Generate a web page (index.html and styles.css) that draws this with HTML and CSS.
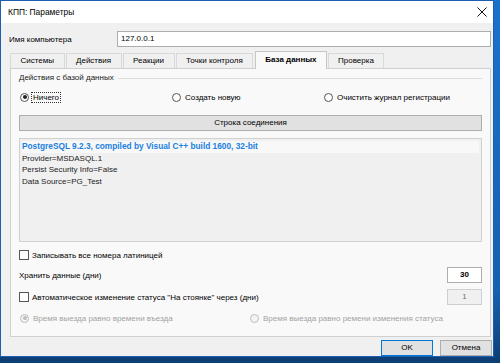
FILE: index.html
```html
<!DOCTYPE html>
<html lang="ru">

<head>
    <meta charset="UTF-8">
    <meta name="viewport" content="width=device-width, initial-scale=1.0">
    <title>КПП: Параметры</title>
    <link rel="stylesheet" href="styles.css">
</head>

<body>
    <div class="window">
        <header class="titlebar">
            <span class="caption">КПП: Параметры</span>
            <svg class="close" width="10" height="10" viewBox="0 0 10 10">
                <path d="M0.5 0.5 L9.5 9.5 M9.5 0.5 L0.5 9.5" stroke="#111" stroke-width="1" fill="none"/>
            </svg>
        </header>

        <main class="client">
            <div class="host-row">
                <span class="label">Имя компьютера</span>
                <div class="edit host">127.0.0.1</div>
            </div>

            <nav class="tabs">
                <div class="tab">Системы</div>
                <div class="tab">Действия</div>
                <div class="tab">Реакции</div>
                <div class="tab">Точки контроля</div>
                <div class="tab active">База данных</div>
                <div class="tab">Проверка</div>
            </nav>

            <section class="page">
                <div class="group-title"><span>Действия с базой данных</span></div>

                <div class="radios three">
                    <div class="radio checked"><i></i><span class="focus">Ничего</span></div>
                    <div class="radio"><i></i><span>Создать новую</span></div>
                    <div class="radio"><i></i><span>Очистить журнал регистрации</span></div>
                </div>

                <div class="btn wide">Строка соединения</div>

                <div class="memo">
                    <p class="version">PostgreSQL 9.2.3, compiled by Visual C++ build 1600, 32-bit</p>
                    <p>Provider=MSDASQL.1</p>
                    <p>Persist Security Info=False</p>
                    <p>Data Source=PG_Test</p>
                </div>

                <div class="check"><i></i><span>Записывать все номера латиницей</span></div>

                <div class="field">
                    <span>Хранить данные (дни)</span>
                    <div class="edit num">30</div>
                </div>

                <div class="field">
                    <div class="check"><i></i><span>Автоматическое изменение статуса "На стоянке" через (дни)</span></div>
                    <div class="edit num disabled">1</div>
                </div>

                <div class="radios two disabled">
                    <div class="radio checked"><i></i><span>Время выезда равно времени въезда</span></div>
                    <div class="radio"><i></i><span>Время выезда равно ремени изменения статуса</span></div>
                </div>
            </section>

            <footer class="buttons">
                <div class="btn default">OK</div>
                <div class="btn">Отмена</div>
            </footer>
        </main>
    </div>
</body>

</html>
```

FILE: styles.css
```css
* {
    margin: 0;
    padding: 0;
    box-sizing: border-box;
}

body {
    width: 500px;
    height: 363px;
    overflow: hidden;
    background: linear-gradient(to bottom, #1b72cc, #1560b0 80%, #0d3d73);
    font: 8px "Liberation Sans", Arial, sans-serif;
    color: #000;
}

.window {
    width: 494px;
    height: 357px;
    border: 1px solid #1a5fb0;
    background-color: #f0f0f0;

    display: flex;
    flex-direction: column;
}

.titlebar {
    height: 22px;
    background-color: #fff;

    display: flex;
    align-items: center;
    justify-content: space-between;
    padding: 0 6px 0 7px;
}

.titlebar .caption {
    font-size: 8.4px;
}

.client {
    flex: 1;
    padding: 8px 2px 0 8px;
}

.host-row {
    height: 16px;
    display: flex;
    align-items: center;
}

.host-row .label {
    width: 108px;
}

.edit {
    height: 16px;
    line-height: 14px;
    padding: 0 3px;
    background-color: #fff;
    border: 1px solid #adadad;
}

.edit.host {
    flex: 1;
}

/* tabs */

.tabs {
    height: 17px;
    margin-top: 4px;
    padding-left: 1px;

    display: flex;
    align-items: flex-end;
}

.tab {
    height: 15px;
    line-height: 13px;
    padding: 0 9.5px;
    margin-right: 1px;
    border: 1px solid #d9d9d9;
    border-bottom: none;
    background-color: #f0f0f0;
}

.tab.active {
    height: 18px;
    line-height: 15px;
    margin: 0 1px -1px 1px;
    padding: 0 9px;
    font-weight: bold;
    border-color: #c6c6c6;
    background-color: #f9f9f9;
    position: relative;
}

.page {
    margin-left: 1px;
    padding: 3px 8px 12px 8px;
    border: 1px solid #d0d0d0;
    background-color: #f9f9f9;
}

.group-title {
    height: 11px;
    line-height: 11px;
    display: flex;
    align-items: center;
    color: #222;
}

.group-title::after {
    content: '';
    flex: 1;
    margin: 1px 0 0 4px;
    border-top: 1px solid #dcdcdc;
}

/* radios and checkboxes */

.radios {
    display: grid;
    margin-top: 8px;
    height: 12px;
}

.radios.three {
    grid-template-columns: 152px 152px 1fr;
}

.radios.two {
    grid-template-columns: 230px 1fr;
    margin-top: 7px;
}

.radio,
.check {
    display: flex;
    align-items: center;
    height: 12px;
}

.radio i {
    width: 9px;
    height: 9px;
    margin: 0 4px 0 1px;
    border: 1px solid #555;
    border-radius: 50%;
    background-color: #fff;

    display: flex;
    align-items: center;
    justify-content: center;
}

.radio.checked i::after {
    content: '';
    width: 4px;
    height: 4px;
    border-radius: 50%;
    background-color: #222;
}

.focus {
    outline: 1px dotted #333;
    outline-offset: 0;
    padding: 0 1px;
    margin-left: -1px;
}

.check i {
    width: 10px;
    height: 10px;
    margin-right: 3px;
    border: 1px solid #555;
    background-color: #fff;
}

.check {
    margin-top: 7px;
}

.disabled {
    color: #a3a3a3;
}

.disabled .radio i {
    border-color: #bcbcbc;
    background-color: #f4f4f4;
}

.disabled .radio.checked i::after {
    background-color: #bcbcbc;
}

/* buttons */

.btn {
    height: 16px;
    line-height: 14px;
    text-align: center;
    border: 1px solid #adadad;
    background-color: #e1e1e1;
}

.btn.wide {
    margin-top: 12px;
}

.memo {
    height: 104px;
    margin-top: 7px;
    padding: 2px 2px 0 2px;
    border: 1px solid #d0d0d0;
    background-color: #f0f0f0;
}

.memo p {
    line-height: 11.5px;
    color: #222;
}

.memo .version {
    color: #1a7fe0;
    font-weight: bold;
    font-size: 8.3px;
    background-color: #f8f8f8;
}

.field {
    height: 16px;
    margin-top: 6px;

    display: flex;
    align-items: center;
    justify-content: space-between;
}

.field .check {
    margin-top: 0;
}

.edit.num {
    width: 35px;
    text-align: center;
    font-weight: bold;
}

.edit.num.disabled {
    font-weight: normal;
    color: #6d6d6d;
    background-color: #f0f0f0;
    border-color: #cfcfcf;
}

.buttons {
    margin-top: 3px;
    margin-right: -1px;

    display: flex;
    justify-content: flex-end;
    gap: 7px;
}

.buttons .btn {
    width: 52px;
}

.buttons .btn.default {
    border-color: #0078d7;
}
```
